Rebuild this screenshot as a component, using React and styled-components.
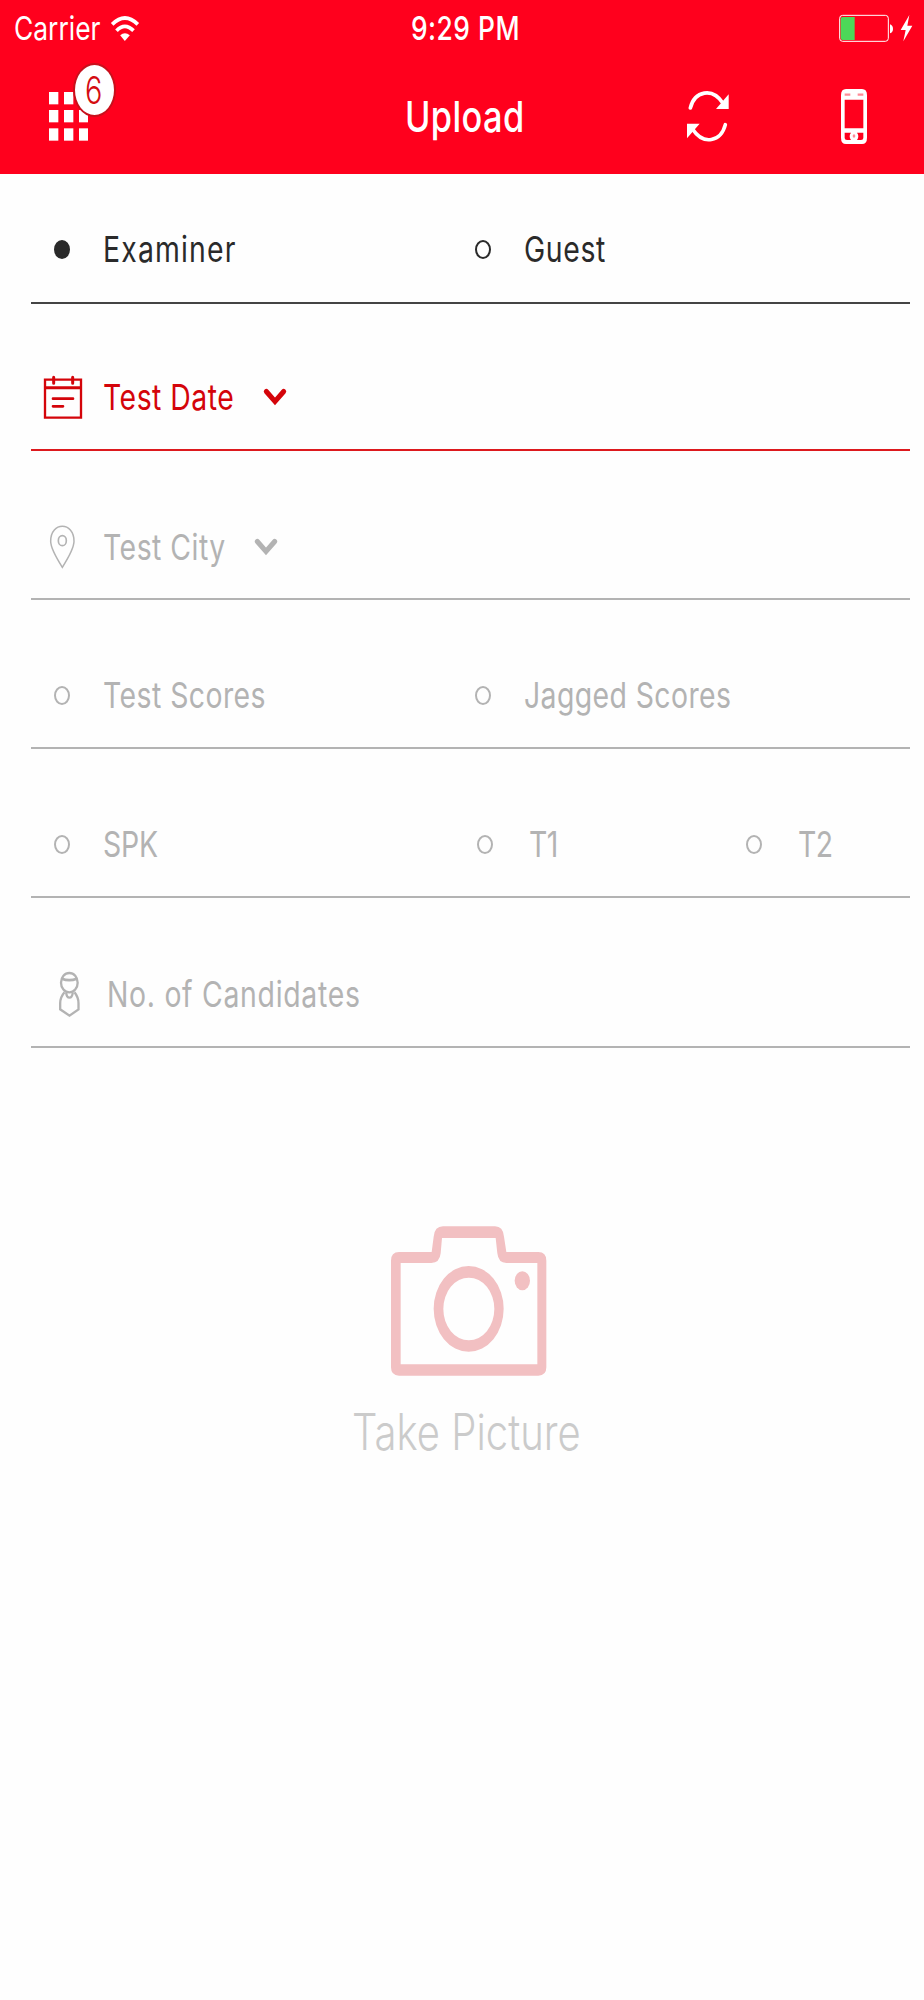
import React from "react";
import styled, { createGlobalStyle } from "styled-components";

const GlobalStyle = createGlobalStyle`
  * { box-sizing: border-box; }
  body {
    margin: 0;
    background: #fefefe;
    font-family: Inter, "Liberation Sans", sans-serif;
  }
`;

const Screen = styled.main`
  width: 924px;
  height: 2000px;
  overflow: hidden;
  background: #fefefe;
`;

const Header = styled.header`
  height: 173.5px;
  background: #ff001d;
  color: #fff;
`;

const StatusBar = styled.div`
  display: grid;
  grid-template-columns: 411px 1fr 85px;
  align-items: center;
  height: 57px;
`;

const Carrier = styled.div`
  display: flex;
  align-items: center;
  padding-left: 13.5px;
`;

const NavBar = styled.nav`
  display: grid;
  grid-template-columns: 405px 282px 154px 1fr;
  align-items: center;
  height: 116.5px;
  padding-top: 3px;
`;

const Text = styled.span`
  display: block;
  flex: none;
  width: ${(p) => p.$width}px;
  font-size: ${(p) => p.$size || 35.5}px;
  font-weight: ${(p) => p.$weight || 370};
  line-height: 1.2;
  letter-spacing: ${(p) => p.$track || 0}px;
  white-space: nowrap;
  transform: scaleX(0.8);
  transform-origin: left center;
`;

const MenuButton = styled.div`
  position: relative;
  width: 40px;
  height: 49px;
  margin-left: 49px;
`;

const Badge = styled.span`
  position: absolute;
  left: 23.5px;
  top: -29.5px;
  width: 43px;
  height: 54px;
  display: flex;
  align-items: center;
  justify-content: center;
  border: 2px solid #c8101c;
  border-radius: 50%;
  background: #fff;
  color: #d40d12;
  font-size: 38.5px;
  font-weight: 350;
`;

const BadgeNumber = styled.span`
  transform: scaleX(0.75);
`;

const Icon = styled.svg`
  display: block;
  flex: none;
  overflow: visible;
  margin-left: ${(p) => p.$left || 0}px;
`;

const Row = styled.section`
  display: grid;
  grid-template-columns: ${(p) => p.$columns || "1fr"};
  align-items: center;
  height: ${(p) => p.$height}px;
  padding-top: ${(p) => p.$height - (p.$inner || 106)}px;
  margin: 0 14px 0 31px;
  border-bottom: 2px solid ${(p) => p.$line};
  color: ${(p) => p.$color};

  ${Text} {
    padding-top: 2px;
  }
`;

const Field = styled.div`
  display: flex;
  align-items: center;
`;

const Lead = styled.div`
  flex: none;
  width: ${(p) => p.$width || 72}px;
`;

const Radio = styled.span`
  display: block;
  width: 16px;
  height: 19px;
  margin-left: 22.5px;
  border: 2px solid currentColor;
  border-radius: 50%;
  background: ${(p) => (p.$checked ? "currentColor" : "transparent")};
`;

const Capture = styled.button`
  display: flex;
  flex-direction: column;
  align-items: flex-start;
  gap: 26px;
  margin: 178px 0 0 352px;
  padding: 0;
  border: 0;
  background: none;
  color: #cbcbcb;
  font-family: inherit;
`;

const GREY = "#b3b3b3";
const DARK = "#2a2a2a";
const RED = "#d4040a";

function Option({ label, checked, lead, track }) {
  return (
    <Field>
      <Lead $width={lead}>
        <Radio $checked={checked} />
      </Lead>
      <Text $track={track}>{label}</Text>
    </Field>
  );
}

const Wifi = () => (
  <Icon $left={10} width="28" height="25" viewBox="335 42 83 75" fill="none" stroke="#fff">
    <path d="M338 67 Q376 29 415 67" strokeWidth="11" />
    <path d="M351 86 Q376 60 402 86" strokeWidth="11" />
    <path d="M362 100 Q376 87 391 100 L376 117Z" fill="#fff" stroke="none" />
  </Icon>
);

const Battery = () => (
  <Icon width="74" height="27" viewBox="538 43 222 81">
    <rect x="540" y="44" width="146" height="78" rx="9" fill="none" stroke="#fff" strokeWidth="3" />
    <path d="M543 55 Q543 49 549 49 H585 V118 H549 Q543 118 543 112Z" fill="#4cd858" />
    <path d="M691 71 Q700 74 700 85 Q700 95 691 98Z" fill="#fff" />
    <path d="M749 43 L723 88 H738 L731 122 L758 75 H743Z" fill="#fff" />
  </Icon>
);

const Grid = () => (
  <svg width="39" height="49" viewBox="147 276 117 147" fill="#fff" display="block">
    {[276, 330, 385].map((y) =>
      [147, 192, 237].map((x) => <rect key={`${x}-${y}`} x={x} y={y} width="28" height="37" />)
    )}
  </svg>
);

const Refresh = () => (
  <Icon width="42" height="51" viewBox="82 274 126 153" fill="none" stroke="#fff" strokeWidth="11" strokeLinecap="round">
    <path d="M92 325 C105 274 158 262 190 311" />
    <path d="M197 375 C184 426 131 438 99 389" />
    <path d="M207 284 V328 H169Z" fill="#fff" stroke="none" />
    <path d="M82 416 V372 H120Z" fill="#fff" stroke="none" />
  </Icon>
);

const Phone = () => (
  <Icon width="26" height="55" viewBox="544 267 78 165">
    <path
      fill="#fff"
      fillRule="evenodd"
      d="M559 267 H607 Q622 267 622 286 V413 Q622 432 607 432 H559 Q544 432 544 413 V286 Q544 267 559 267Z M555 299 V385 H611 V299Z M555 398 V414 Q555 420 562 420 H574 Q566 408 574 398Z M611 398 V414 Q611 420 604 420 H592 Q600 408 592 398Z"
    />
    <path d="M555 284 H572 M594 284 H611" stroke="#ff8a96" strokeWidth="7" />
    <ellipse cx="583" cy="408" rx="4" ry="5" fill="#ff8a96" />
  </Icon>
);

const Calendar = () => (
  <Icon $left={13} width="38" height="43" viewBox="131 527 114 129" fill="none" stroke="currentColor" strokeWidth="7">
    <path d="M134 538 H242 V652 H134Z" />
    <path d="M134 562 H242" strokeWidth="9" />
    <path d="M160 531 V549 M217 531 V549" strokeWidth="9" strokeLinecap="round" />
    <path d="M158 595 H218 M158 618 H188" strokeWidth="8" strokeLinecap="round" />
  </Icon>
);

const Pin = () => (
  <Icon $left={19} width="25" height="42" viewBox="151 80 75 126" fill="none" stroke="currentColor">
    <path d="M188 204 Q153 149 153 126 C153 66 223 66 223 126 Q223 149 188 204Z" strokeWidth="4.5" />
    <ellipse cx="188" cy="124" rx="12" ry="15" strokeWidth="5" />
  </Icon>
);

const Person = () => (
  <Icon $left={28} width="21" height="45" viewBox="178 516 62 135" fill="none" stroke="currentColor" strokeWidth="7">
    <ellipse cx="208.500" cy="548" rx="25" ry="29" />
    <path d="M186 536 Q208 545 231 536" strokeWidth="8" />
    <path d="M194 577 Q181 592 181 610 V628 L209 647 L236 628 V610 Q236 592 224 577" />
    <path d="M199 577 Q200 593 209 593 Q217 593 219 577" />
  </Icon>
);

const Chevron = () => (
  <Icon width="22" height="17" viewBox="793 565 66 50" fill="none" stroke="currentColor" strokeWidth="15" strokeLinecap="round">
    <path d="M800 572 L826 602 L852 572" />
  </Icon>
);

const Camera = () => (
  <Icon $left={39.3} width="156" height="150" viewBox="154 48 468 450" fill="#f2c0c2" fillRule="evenodd">
    <path d="M154 152 Q154 126 178 126 H276 L282 80 Q285 49 310 49 H466 Q490 49 493 80 L500 126 H596 Q620 126 620 152 V472 Q620 497 596 497 H178 Q154 497 154 472Z M183 159 V463 H593 V159 H500 Q476 159 473 130 L468 84 H307 L303 130 Q300 159 275 159Z" />
    <path d="M282 296.500 A105 128.500 0 1 0 492 296.500 A105 128.500 0 1 0 282 296.500Z M311 297 A76.500 94 0 1 0 464 297 A76.500 94 0 1 0 311 297Z" />
    <ellipse cx="548" cy="212.500" rx="23" ry="28.500" />
  </Icon>
);

export default function App() {
  return (
    <Screen>
      <GlobalStyle />
      <Header>
        <StatusBar>
          <Carrier>
            <Text $size={33} $weight={400} $width={87.5}>Carrier</Text>
            <Wifi />
          </Carrier>
          <Text $size={33} $weight={500} $track={0.6}>9:29 PM</Text>
          <Battery />
        </StatusBar>
        <NavBar>
          <MenuButton>
            <Grid />
            <Badge>
              <BadgeNumber>6</BadgeNumber>
            </Badge>
          </MenuButton>
          <Text $size={43} $weight={550} $track={0.5}>Upload</Text>
          <Refresh />
          <Phone />
        </NavBar>
      </Header>

      <Row $height={130} $columns="421px 1fr" $color={DARK} $line="#444">
        <Option label="Examiner" track={1.45} checked />
        <Option label="Guest" track={0.8} />
      </Row>
      <Row $height={147} $inner={104} $color={RED} $line="#dd1a1e">
        <Field>
          <Lead><Calendar /></Lead>
          <Text $width={161} $track={0.6}>Test Date</Text>
          <Chevron />
        </Field>
      </Row>
      <Row $height={149.5} $inner={104} $color={GREY} $line={GREY}>
        <Field>
          <Lead><Pin /></Lead>
          <Text $width={152} $track={0.6}>Test City</Text>
          <Chevron />
        </Field>
      </Row>
      <Row $height={149} $columns="421px 1fr" $color={GREY} $line={GREY}>
        <Option label="Test Scores" track={0.55} />
        <Option label="Jagged Scores" track={0.5} />
      </Row>
      <Row $height={149} $columns="423px 269px 1fr" $color={GREY} $line={GREY}>
        <Option label="SPK" track={-0.3} />
        <Option label="T1" track={-0.8} lead={75} />
        <Option label="T2" track={-0.8} lead={75} />
      </Row>
      <Row $height={150} $color={GREY} $line={GREY}>
        <Field>
          <Lead $width={76}><Person /></Lead>
          <Text $track={0.87}>No. of Candidates</Text>
        </Field>
      </Row>

      <Capture>
        <Camera />
        <Text $size={50} $weight={260} $track={0.05}>Take Picture</Text>
      </Capture>
    </Screen>
  );
}
